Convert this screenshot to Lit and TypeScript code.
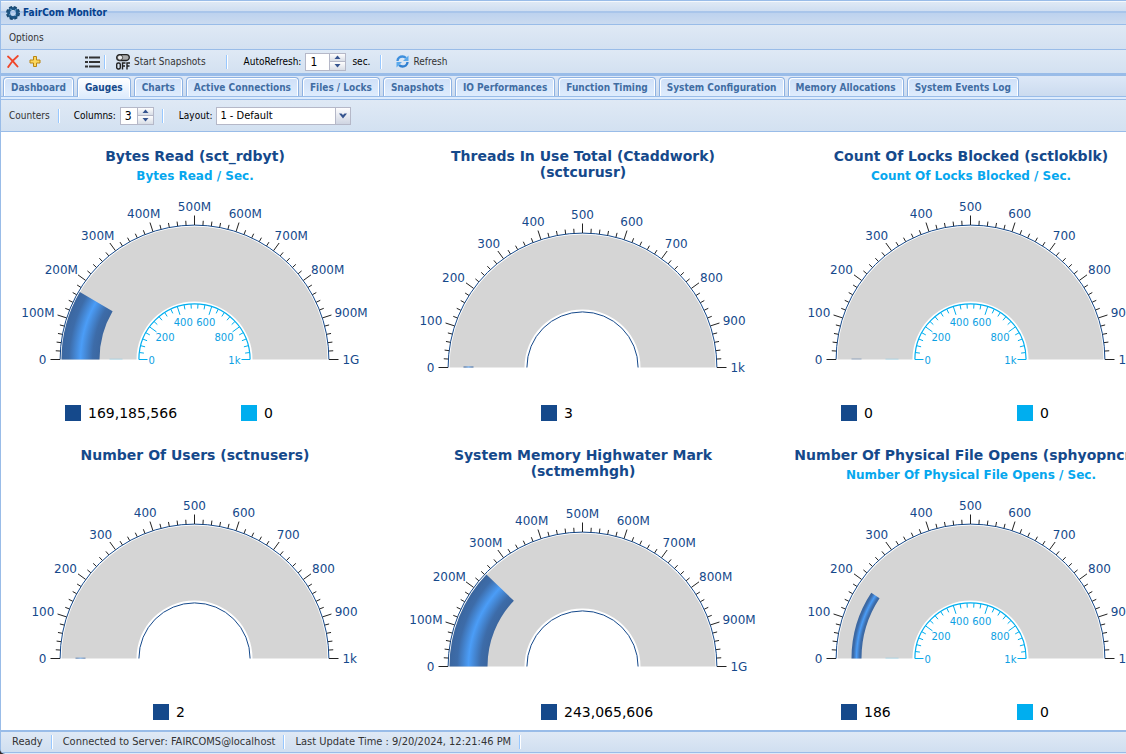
import { LitElement, html, svg, css, nothing } from "lit";
import { customElement, property, state } from "lit/decorators.js";
import { classMap } from "lit/directives/class-map.js";

interface GaugeData {
  title: string;
  rate?: string;
  value: number;
  rateValue?: number;
  unit: "k" | "M";
  wide?: boolean;
}

const GAUGES: GaugeData[] = [
  { title: "Bytes Read (sct_rdbyt)", rate: "Bytes Read / Sec.", value: 169185566, rateValue: 0, unit: "M", wide: true },
  { title: "Threads In Use Total (Ctaddwork) (sctcurusr)", value: 3, unit: "k" },
  { title: "Count Of Locks Blocked (sctlokblk)", rate: "Count Of Locks Blocked / Sec.", value: 0, rateValue: 0, unit: "k" },
  { title: "Number Of Users (sctnusers)", value: 2, unit: "k" },
  { title: "System Memory Highwater Mark (sctmemhgh)", value: 243065606, unit: "M", wide: true },
  { title: "Number Of Physical File Opens (sphyopncnt)", rate: "Number Of Physical File Opens / Sec.", value: 186, rateValue: 0, unit: "k" },
];

const TABS = [
  "Dashboard", "Gauges", "Charts", "Active Connections", "Files / Locks", "Snapshots",
  "IO Performances", "Function Timing", "System Configuration", "Memory Allocations", "System Events Log",
];

const CX = 193.5;
const CY = 165.5;

/* Point on the dial: t runs from 0 (left) to 1 (right). */
function pt(t: number, rx: number, ry = rx): [number, number] {
  const a = Math.PI * t;
  return [CX - Math.cos(a) * rx, CY - Math.sin(a) * ry];
}

function band(from: number, to: number, outer: number, inner: number): string {
  const [a, b] = pt(from, outer);
  const [c, d] = pt(to, outer);
  const [e, f] = pt(to, inner);
  const [g, h] = pt(from, inner);
  return `M${a} ${b}A${outer} ${outer} 0 0 1 ${c} ${d}L${e} ${f}A${inner} ${inner} 0 0 0 ${g} ${h}Z`;
}

function arc(r: number): string {
  return `M${CX - r} ${CY}A${r} ${r} 0 0 1 ${CX + r} ${CY}`;
}

function ticks(count: number, major: number, start: number, majorEnd: number, minorEnd: number): string {
  let d = "";
  for (let i = 0; i <= count; i++) {
    const [x1, y1] = pt(i / count, start);
    const [x2, y2] = pt(i / count, i % major === 0 ? majorEnd : minorEnd);
    d += `M${x1} ${y1}L${x2} ${y2}`;
  }
  return d;
}

function textWidth(s: string, size: number): number {
  let w = 0;
  for (const ch of s) w += ch === "M" ? 0.86 : ch === "G" ? 0.77 : ch === "k" ? 0.58 : 0.636;
  return w * size;
}

@customElement("fc-gauge")
export class FcGauge extends LitElement {
  @property({ attribute: false }) data!: GaugeData;

  static styles = css`
    :host {
      display: flex;
      flex-direction: column;
      padding-top: 16px;
      min-height: 283px;
      font-family: Verdana, "DejaVu Sans", sans-serif;
      text-align: center;
    }
    .title {
      margin: 0;
      padding: 0 17px;
      font-size: 14px;
      line-height: 16px;
      font-weight: bold;
      color: #15498b;
    }
    .title span { display: inline-block; white-space: nowrap; }
    .rate {
      margin: 5px 0 0;
      height: 15px;
      font-size: 12px;
      line-height: 15px;
      font-weight: bold;
      color: #06a7ee;
      white-space: nowrap;
    }
    .dial {
      flex: 1;
      display: flex;
      align-items: center;
      justify-content: center;
    }
    .dial svg { display: block; overflow: visible; }
    .axis { fill: none; stroke: #15498b; stroke-width: 1; }
    .tick { fill: none; stroke: #222; stroke-width: 1; }
    .axis-rate { fill: none; stroke: #00aeef; stroke-width: 1.2; }
    .tick-rate { fill: none; stroke: #00aeef; stroke-width: 1; }
    .face { fill: #d5d5d5; }
    .label { font-size: 12px; fill: #15498b; text-anchor: middle; }
    .label-rate { font-size: 10px; fill: #0c9fe3; text-anchor: middle; }
    .legend {
      display: grid;
      grid-auto-flow: column;
      grid-auto-columns: 176px;
      justify-content: center;
      padding: 25px 0 10px;
    }
    .item {
      display: flex;
      gap: 7px;
      padding-left: 46px;
      font-size: 14px;
      line-height: 16px;
      color: #000;
    }
    .swatch { width: 16px; height: 16px; background: #15498b; }
    .swatch.light { background: #00aeef; }
  `;

  render() {
    const d = this.data;
    const max = d.unit === "M" ? 1e9 : 1000;
    const t = d.value / max;
    const labels = Array.from({ length: 11 }, (_, i) =>
      i === 0 ? "0" : i === 10 ? (d.unit === "M" ? "1G" : "1k") : `${i * 100}${d.unit === "M" ? "M" : ""}`);
    const outer = d.wide ? 133 : 119;
    const inner = d.wide ? 95 : 109;
    const cut = d.title.lastIndexOf(" (");
    return html`
      <h2 class="title"><span>${d.title.slice(0, cut)}</span> <span>${d.title.slice(cut + 1)}</span></h2>
      <p class="rate">${d.rate ?? nothing}</p>
      <div class="dial">
        <svg width="388" height="176" viewBox="0 0 388 176" role="img" aria-label=${d.title}>
          <defs>
            <radialGradient id="g" gradientUnits="userSpaceOnUse" cx=${CX} cy=${CY} r=${outer}>
              <stop offset=${inner / outer} stop-color="#3b669f"></stop>
              <stop offset=${(inner * 0.82 + outer * 0.18) / outer} stop-color="#3d6ca9"></stop>
              <stop offset=${(inner * 0.5 + outer * 0.5) / outer} stop-color="#4b9df7"></stop>
              <stop offset=${(inner * 0.2 + outer * 0.8) / outer} stop-color="#3d6ca9"></stop>
              <stop offset="1" stop-color="#3b669f"></stop>
            </radialGradient>
          </defs>
          <path class="face" d=${band(0, 1, 133, 58)}></path>
          ${t > 0
            ? svg`<path fill="url(#g)" d=${band(0, t, outer, inner)}></path>`
            : svg`<path fill="#15498b" opacity="0.35" d=${band(0, 0.003, outer, inner)}></path>`}
          ${d.rate ? svg`<path fill="#00aeef" opacity="0.3" d=${band(0, 0.003, 85, 72)}></path>` : nothing}
          <path class="axis" d=${arc(134.4)}></path>
          <path class="tick" d=${ticks(50, 5, 134.5, 144, 139)}></path>
          ${labels.map((s, i) => {
            const [x, y] = pt(i / 10, 148 + textWidth(s, 12) / 2, 153);
            return svg`<text class="label" x=${x} y=${y + 4.5}>${s}</text>`;
          })}
          ${d.rate
            ? svg`
              <path class="axis-rate" d=${arc(55.6)}></path>
              <path class="tick-rate" d=${ticks(25, 5, 55.5, 47, 51)}></path>
              ${["0", "200", "400", "600", "800", "1k"].map((s, i) => {
                const [x, y] = pt(i / 5, 46 - textWidth(s, 10) / 2, 39);
                return svg`<text class="label-rate" x=${x} y=${y + 4}>${s}</text>`;
              })}`
            : svg`<path class="axis" d=${arc(55.6)}></path>`}
        </svg>
      </div>
      <div class="legend">
        <div class="item"><span class="swatch"></span><span>${d.value.toLocaleString("en-US")}</span></div>
        ${d.rate ? html`<div class="item"><span class="swatch light"></span><span>${d.rateValue}</span></div>` : nothing}
      </div>
    `;
  }
}

@customElement("fc-spinner")
export class FcSpinner extends LitElement {
  @property() label = "";
  @property({ type: Number }) value = 1;
  @property({ type: Number }) digits = 1;

  static styles = css`
    :host { display: inline-flex; }
    label {
      display: flex;
      align-items: center;
      gap: 4px;
      color: #000;
      white-space: nowrap;
    }
    .box { display: flex; height: 18px; }
    input {
      box-sizing: border-box;
      width: 17px;
      height: 18px;
      padding: 0 0 0 4px;
      border: 1px solid #b5b8c8;
      border-right: 0;
      border-radius: 0;
      background: #fff;
      font: inherit;
      font-size: 12px;
      color: #000;
      outline: none;
    }
    input.long { width: 24px; }
    .arrows { display: flex; flex-direction: column; }
    button {
      display: flex;
      align-items: center;
      justify-content: center;
      box-sizing: border-box;
      width: 17px;
      height: 9px;
      padding: 0;
      border: 1px solid #b5b8c8;
      background: linear-gradient(#fefefe, #d8dde6);
    }
    button + button { border-top: 0; }
    svg { display: block; }
  `;

  render() {
    return html`
      <label>${this.label}
        <span class="box">
          <input class=${classMap({ long: this.digits > 1 })} type="text" inputmode="numeric" .value=${String(this.value)}>
          <span class="arrows">
            <button aria-label="Increase" @click=${() => (this.value += 1)}>
              <svg width="7" height="4" viewBox="0 0 7 4"><path d="M0.500 4L3.500 0.500L6.500 4Z" fill="#36548f"/></svg>
            </button>
            <button aria-label="Decrease" @click=${() => (this.value = Math.max(1, this.value - 1))}>
              <svg width="7" height="4" viewBox="0 0 7 4"><path d="M0.500 0L3.500 3.500L6.500 0Z" fill="#36548f"/></svg>
            </button>
          </span>
        </span>
      </label>
    `;
  }
}

@customElement("app-root")
export class AppRoot extends LitElement {
  @state() private active = "Gauges";

  static styles = css`
    :host {
      display: block;
      background: #33282a;
      font-family: Tahoma, "DejaVu Sans Condensed", "DejaVu Sans", sans-serif;
      font-size: 10px;
      color: #333;
    }
    .window {
      box-sizing: border-box;
      min-height: 100vh;
      display: flex;
      flex-direction: column;
      overflow: hidden;
      border: solid #99bce8;
      border-width: 1px 0 0 1px;
      border-bottom-left-radius: 5px;
      background: #dfe9f6;
    }
    button { font: inherit; color: inherit; border: 0; padding: 0; background: none; white-space: nowrap; }
    .titlebar {
      display: flex;
      align-items: center;
      gap: 3px;
      height: 23px;
      padding-left: 5px;
      border-bottom: 1px solid #99bce8;
      background: linear-gradient(#f4f8fd 0 1px, #dfe9f5 1px, #cfdef1 10px, #a9c5ea 10px 12px, #bdd2ee 12px, #cbdbf0 23px);
    }
    .titlebar h1 { margin: 0; font-size: 10px; line-height: 14px; font-weight: bold; color: #04408c; }
    .bar {
      display: flex;
      align-items: center;
      background: linear-gradient(#dfe9f5, #d3e1f1);
    }
    .menu { height: 24px; padding-left: 8px; border-bottom: 1px solid #99bce8; }
    .tools { height: 23px; padding-left: 6px; border-bottom: 3px solid #99bce8; }
    .tools svg, .titlebar svg { display: block; flex: none; }
    .sep { width: 1px; height: 14px; background: #98c8ff; border-right: 1px solid #fff; }
    .pair { display: flex; gap: 10px; width: 78px; }
    .list { padding-right: 4px; }
    .with-icon { display: flex; align-items: center; gap: 4px; }
    .snap { padding: 0 20px 0 10px; }
    .auto { padding: 0 10px 0 16px; display: flex; gap: 6px; align-items: center; }
    .refresh { padding-left: 14px; }
    .dark { color: #000; }
    .tabs {
      display: flex;
      align-items: flex-end;
      gap: 3px;
      height: 20px;
      padding-left: 2px;
      background: linear-gradient(#dde8f7, #cbdbef);
      border-bottom: 1px solid #99bce8;
    }
    .tab {
      box-sizing: border-box;
      height: 19px;
      padding: 0 7px;
      border: 1px solid #8db2e3;
      border-bottom: 0;
      border-radius: 4px 4px 0 0;
      box-shadow: inset 1px 1px #fff, inset -1px 0 #fff;
      background: linear-gradient(#cfe0f8, #deecfd);
      font-weight: bold;
      color: #416da3;
    }
    .tab.on {
      height: 20px;
      margin-bottom: -1px;
      background: linear-gradient(#fff, #deecfd);
      color: #15498b;
    }
    .strip { height: 2px; background: #deecfd; border-bottom: 1px solid #99bce8; }
    .filters { height: 31px; padding-left: 8px; border-bottom: 1px solid #99bce8; }
    .counters { padding-right: 8px; }
    .columns { padding: 0 8px 0 14px; }
    .layout { display: flex; align-items: center; gap: 4px; padding-left: 15px; }
    .select { display: grid; align-items: center; justify-items: end; }
    .select > * { grid-area: 1 / 1; }
    select {
      box-sizing: border-box;
      width: 135px;
      height: 18px;
      padding: 0 18px 0 3px;
      border: 1px solid #b5b8c8;
      border-radius: 0;
      background: #fff;
      appearance: none;
      font: inherit;
      font-size: 11px;
      color: #000;
      outline: none;
    }
    .arrow {
      box-sizing: border-box;
      display: grid;
      place-items: center;
      width: 16px;
      height: 18px;
      border: 1px solid #b5b8c8;
      background: linear-gradient(#fdfdfe, #cfd5e2);
      pointer-events: none;
    }
    .board {
      flex: 1;
      display: grid;
      grid-template-columns: repeat(3, minmax(388px, 1fr));
      align-content: start;
      background: #fff;
      overflow: hidden;
    }
    .status {
      display: flex;
      align-items: center;
      height: 20px;
      padding-left: 11px;
      border-top: 2px solid #99bce8;
      border-bottom: 1px solid #99bce8;
      background: linear-gradient(#dfe9f5, #d0dff0);
      margin-bottom: 1px;
      font-size: 11px;
      line-height: 16px;
      white-space: nowrap;
    }
    .status .sep { margin: 0 10px 0 8px; }
  `;

  render() {
    return html`
      <div class="window">
        <header class="titlebar">
          <svg width="14" height="14" viewBox="0 0 14 14" aria-hidden="true">
            <circle cx="7" cy="7" r="4.400" fill="none" stroke="#1d5585" stroke-width="3"/>
            <circle cx="7" cy="7" r="6.200" fill="none" stroke="#17476f" stroke-width="1.600" stroke-dasharray="3.200 1.670"/>
            <path d="M4 3l2 1M10 3l-1 2M3 9l2-1M10 10l-1-1" stroke="#5f9cc4" stroke-width="1"/>
          </svg>
          <h1>FairCom Monitor</h1>
        </header>
        <nav class="bar menu"><button>Options</button></nav>
        <div class="bar tools">
          <div class="pair">
            <button aria-label="Remove">
              <svg width="12" height="13" viewBox="0 0 12 13"><path d="M1 1.500C4 4 7.500 8 10.500 11.500M10.800 1C7 4 3.500 8 1.200 12" fill="none" stroke="#f0472a" stroke-width="1.900" stroke-linecap="round"/></svg>
            </button>
            <button aria-label="Add">
              <svg width="12" height="13" viewBox="0 0 12 13"><path d="M4.500 1.500h3v3.500h3.500v3h-3.500v3.500h-3v-3.500h-3.500v-3h3.500z" fill="#fbd75e" stroke="#b98512" stroke-width="1"/></svg>
            </button>
          </div>
          <button class="list" aria-label="List">
            <svg width="15" height="12" viewBox="0 0 15 12"><path d="M0 1.500h3M0 6h3M0 10.500h3M4 1.500h11M4 6h11M4 10.500h11" stroke="#333" stroke-width="2"/></svg>
          </button>
          <span class="sep"></span>
          <div class="snap">
            <button class="with-icon">
              <svg width="14" height="16" viewBox="0 0 14 16">
                <rect x="0.700" y="0.700" width="12.600" height="5.800" rx="2.900" fill="#aaa" stroke="#222" stroke-width="1.300"/>
                <circle cx="4" cy="3.600" r="2.600" fill="#eee" stroke="#333" stroke-width="0.900"/>
                <rect x="0.700" y="9" width="3.600" height="6" rx="1.500" fill="none" stroke="#222" stroke-width="1.400"/>
                <path d="M6.500 15.500V9H9.500M6.500 12H9M11 15.500V9H14M11 12H13.500" fill="none" stroke="#222" stroke-width="1.400"/>
              </svg>
              <span>Start Snapshots</span>
            </button>
          </div>
          <span class="sep"></span>
          <div class="auto"><fc-spinner label="AutoRefresh:" value="1" digits="2"></fc-spinner><span class="dark">sec.</span></div>
          <span class="sep"></span>
          <div class="refresh">
            <button class="with-icon">
              <svg width="13" height="13" viewBox="0 0 13 13">
                <path d="M1.500 6C1.600 3 4 1.500 6.500 1.500C8 1.500 9 2 10 3" fill="none" stroke="#3d8fdd" stroke-width="2.400"/>
                <path d="M12.500 0.500V6H7Z" fill="#5aa9ec"/>
                <path d="M11.500 7C11.400 10 9 11.500 6.500 11.500C5 11.500 4 11 3 10" fill="none" stroke="#2f7fd0" stroke-width="2.400"/>
                <path d="M0.500 12.500V7H6Z" fill="#5aa9ec"/>
              </svg>
              <span>Refresh</span>
            </button>
          </div>
        </div>
        <div class="tabs" role="tablist">
          ${TABS.map((t) => html`<button role="tab" aria-selected=${t === this.active}
            class=${classMap({ tab: true, on: t === this.active })} @click=${() => (this.active = t)}>${t}</button>`)}
        </div>
        <div class="strip"></div>
        <div class="bar filters">
          <button class="counters">Counters</button>
          <span class="sep"></span>
          <div class="columns"><fc-spinner label="Columns:" value="3"></fc-spinner></div>
          <span class="sep"></span>
          <div class="layout">
            <label class="dark" for="layout">Layout:</label>
            <span class="select">
              <select id="layout"><option>1 - Default</option></select>
              <span class="arrow"><svg width="8" height="6" viewBox="0 0 8 6"><path d="M0 0.500H2.500L4 2L5.500 0.500H8L4 5.500Z" fill="#36548f"/></svg></span>
            </span>
          </div>
        </div>
        <main class="board">${GAUGES.map((g) => html`<fc-gauge .data=${g}></fc-gauge>`)}</main>
        <footer class="status">
          <span>Ready</span><span class="sep"></span>
          <span>Connected to Server: FAIRCOMS@localhost</span><span class="sep"></span>
          <span>Last Update Time : 9/20/2024, 12:21:46 PM</span><span class="sep"></span>
        </footer>
      </div>
    `;
  }
}
